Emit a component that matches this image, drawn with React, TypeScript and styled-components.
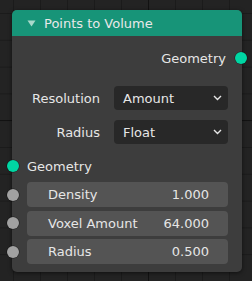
import React from "react";
import styled, { createGlobalStyle } from "styled-components";

const GlobalStyle = createGlobalStyle`
  html, body { margin: 0; padding: 0; background: #232323; }
  body { font-family: "DejaVu Sans", "Liberation Sans", sans-serif; }
`;

const Canvas = styled.div`
  position: relative;
  width: 252px;
  height: 281px;
  overflow: hidden;
  box-sizing: border-box;
  padding: 10px 0 0 12px;
  background-color: #232323;
  background-image:
    linear-gradient(#121212, #121212),
    linear-gradient(#121212, #121212),
    linear-gradient(to right, #1b1b1b 1px, transparent 1px),
    linear-gradient(to bottom, #1b1b1b 1px, transparent 1px);
  background-size: 1px 100%, 100% 1px, 27px 100%, 100% 26.8px;
  background-position: 148px 0, 0 120px, 13px 0, 0 13px;
  background-repeat: no-repeat, no-repeat, repeat, repeat;
`;

const Node = styled.div`
  position: relative;
  width: 230px;
  border-radius: 5px;
  background: #3d3d3d;
  box-shadow: 0 1px 4px rgba(0, 0, 0, 0.55);
  color: #e6e6e6;
  font-size: 13px;
`;

const Header = styled.div`
  height: 26px;
  display: flex;
  align-items: center;
  gap: 8px;
  padding-left: 15px;
  background: #179478;
  border-radius: 5px 5px 0 0;
  color: #e8e8e8;
`;

const Body = styled.div`
  display: flex;
  flex-direction: column;
  padding-bottom: 8px;
`;

const SocketRow = styled.div<{ $out?: boolean; $mt: number }>`
  position: relative;
  height: 24px;
  margin-top: ${(p) => p.$mt}px;
  display: flex;
  align-items: center;
  justify-content: ${(p) => (p.$out ? "flex-end" : "flex-start")};
  padding: ${(p) => (p.$out ? "0 16px 0 0" : "0 0 0 15px")};
`;

const Socket = styled.span<{ $out?: boolean; $color: string }>`
  position: absolute;
  top: 50%;
  ${(p) => (p.$out ? "right: -5px;" : "left: -5.5px;")}
  width: 12px;
  height: 12px;
  margin-top: -6px;
  border-radius: 50%;
  background: ${(p) => p.$color};
  box-shadow: 0 0 0 0.5px rgba(0, 0, 0, 0.5);
`;

const PropRow = styled.div<{ $mt: number }>`
  height: 24px;
  margin-top: ${(p) => p.$mt}px;
  display: grid;
  grid-template-columns: 88px 114px;
  column-gap: 14px;
  align-items: center;
`;

const PropLabel = styled.span`
  text-align: right;
  white-space: nowrap;
`;

const Dropdown = styled.div`
  height: 24px;
  box-sizing: border-box;
  border-radius: 4px;
  background: #282828;
  display: flex;
  align-items: center;
  justify-content: space-between;
  padding: 0 6px 0 9px;
`;

const FieldRow = styled.div<{ $mt: number }>`
  position: relative;
  height: 25px;
  margin-top: ${(p) => p.$mt}px;
  padding: 0 14px 0 15px;
  display: flex;
`;

const Field = styled.div`
  flex: 1;
  border-radius: 4px;
  background: #545454;
  display: flex;
  align-items: center;
  justify-content: space-between;
  padding: 0 19px 0 21px;
`;

const Triangle = () => (
  <svg width="9" height="7" viewBox="0 0 9 7">
    <polygon points="0.5,0.5 8.5,0.5 4.5,6.5" fill="#a9d9cb" />
  </svg>
);

const Chevron = () => (
  <svg width="9" height="6" viewBox="0 0 9 6">
    <polyline points="1,1 4.5,4.5 8,1" fill="none" stroke="#e6e6e6" strokeWidth="1.4" />
  </svg>
);

const GEO = "#00d6a3";
const GREY = "#a1a1a1";

const fields = [
  { label: "Density", value: "1.000" },
  { label: "Voxel Amount", value: "64.000" },
  { label: "Radius", value: "0.500" },
];

export default function App() {
  return (
    <>
      <GlobalStyle />
      <Canvas>
        <Node>
          <Header>
            <Triangle />
            <span>Points to Volume</span>
          </Header>
          <Body>
            <SocketRow $out $mt={10}>
              <span>Geometry</span>
              <Socket $out $color={GEO} />
            </SocketRow>
            <PropRow $mt={16}>
              <PropLabel>Resolution</PropLabel>
              <Dropdown>
                <span>Amount</span>
                <Chevron />
              </Dropdown>
            </PropRow>
            <PropRow $mt={10}>
              <PropLabel>Radius</PropLabel>
              <Dropdown>
                <span>Float</span>
                <Chevron />
              </Dropdown>
            </PropRow>
            <SocketRow $mt={10}>
              <Socket $color={GEO} />
              <span>Geometry</span>
            </SocketRow>
            {fields.map((f, i) => (
              <FieldRow key={f.label} $mt={i === 0 ? 4 : 3.5}>
                <Socket $color={GREY} />
                <Field>
                  <span>{f.label}</span>
                  <span>{f.value}</span>
                </Field>
              </FieldRow>
            ))}
          </Body>
        </Node>
      </Canvas>
    </>
  );
}
